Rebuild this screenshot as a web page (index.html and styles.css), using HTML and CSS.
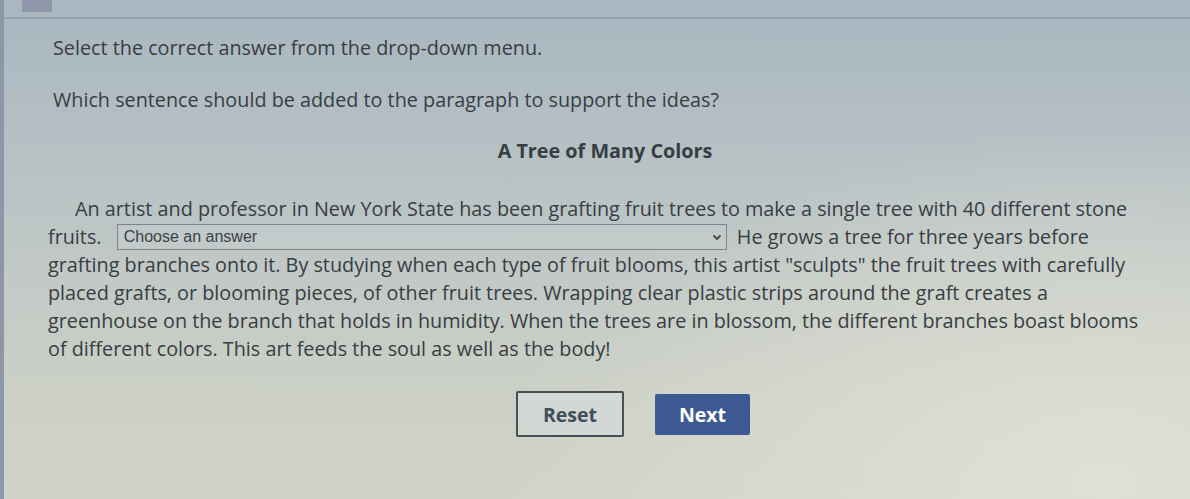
FILE: index.html
```html
<!DOCTYPE html>
<html>
<head>
<meta charset="utf-8">
<link rel="stylesheet" href="styles.css">
</head>
<body>
<div class="screen">
  <div class="topbar"><span class="tab"></span></div>
  <div class="content">
    <p class="instr">Select the correct answer from the drop-down menu.</p>
    <p class="question">Which sentence should be added to the paragraph to support the ideas?</p>
    <h2 class="title">A Tree of Many Colors</h2>
    <p class="passage">An artist and professor in New York State has been grafting fruit trees to make a single tree with 40 different stone fruits. <span class="select"><span class="select-text">Choose an answer</span><svg class="chev" width="10" height="7" viewBox="0 0 10 7"><path d="M1.5 1.5 L5 5 L8.5 1.5" fill="none" stroke="#444" stroke-width="1.8"/></svg></span> He grows a tree for three years before grafting branches onto it. By studying when each type of fruit blooms, this artist "sculpts" the fruit trees with carefully placed grafts, or blooming pieces, of other fruit trees. Wrapping clear plastic strips around the graft creates a greenhouse on the branch that holds in humidity. When the trees are in blossom, the different branches boast blooms of different colors. This art feeds the soul as well as the body!</p>
    <div class="actions">
      <button class="btn reset">Reset</button>
      <button class="btn next">Next</button>
    </div>
  </div>
</div>
</body>
</html>
```
FILE: styles.css
```css
html, body {
  margin: 0;
  padding: 0;
}
body {
  width: 1190px;
  height: 499px;
  overflow: hidden;
  font-family: "Open Sans", "DejaVu Sans", sans-serif;
  color: #383d43;
}
.screen {
  width: 1190px;
  height: 499px;
  background:
    radial-gradient(ellipse 600px 350px at 1100px 480px, rgba(225,226,214,0.9), rgba(225,226,214,0) 100%),
    linear-gradient(180deg, #a9b6c0 0%, #b3bfc4 25%, #c2c9c6 55%, #ccd0c6 80%, #d0d3c8 100%);
  border-left: 4px solid #8d97a8;
  box-sizing: border-box;
}
.topbar {
  height: 17px;
  border-bottom: 2px solid #96a3ad;
  padding-left: 18px;
}
.tab {
  display: block;
  width: 30px;
  height: 12px;
  background: #8e97aa;
}
.content {
  padding: 0 0 0 44px;
}
.instr {
  margin: 17px 0 0 5px;
  font-size: 19.8px;
  line-height: 24px;
}
.question {
  margin: 28px 0 0 5px;
  font-size: 19.8px;
  line-height: 24px;
}
.title {
  margin: 27px 0 0 0;
  width: 1114px;
  text-align: center;
  font-size: 19.8px;
  line-height: 24px;
  font-weight: 700;
}
.passage {
  margin: 32px 0 0 0;
  width: 1095px;
  font-size: 19.8px;
  line-height: 28px;
  text-indent: 27px;
}
.select {
  display: inline-flex;
  align-items: center;
  justify-content: space-between;
  width: 610px;
  height: 26px;
  box-sizing: border-box;
  border: 1px solid #7d848a;
  padding: 0 4px 0 6px;
  margin: 0 5px 0 10px;
  vertical-align: 2px;
  text-indent: 0;
  background: rgba(200,208,208,0.35);
}
.select-text {
  font-family: "Liberation Sans", Arial, sans-serif;
  font-size: 16px;
  color: #3d4146;
  line-height: 1;
}
.chev {
  display: block;
}
.actions {
  display: flex;
  gap: 31px;
  margin: 28px 0 0 468px;
  align-items: center;
}
.btn {
  font-family: "Open Sans", "DejaVu Sans", sans-serif;
  font-weight: 700;
  font-size: 19.5px;
  cursor: pointer;
  padding: 0;
}
.reset {
  width: 108px;
  height: 46px;
  border: 2px solid #4a4e52;
  border-radius: 2px;
  background: #d3d8d4;
  color: #414d5a;
}
.next {
  width: 95px;
  height: 41px;
  border: none;
  border-radius: 2px;
  background: #3c5992;
  color: #ffffff;
}
```
